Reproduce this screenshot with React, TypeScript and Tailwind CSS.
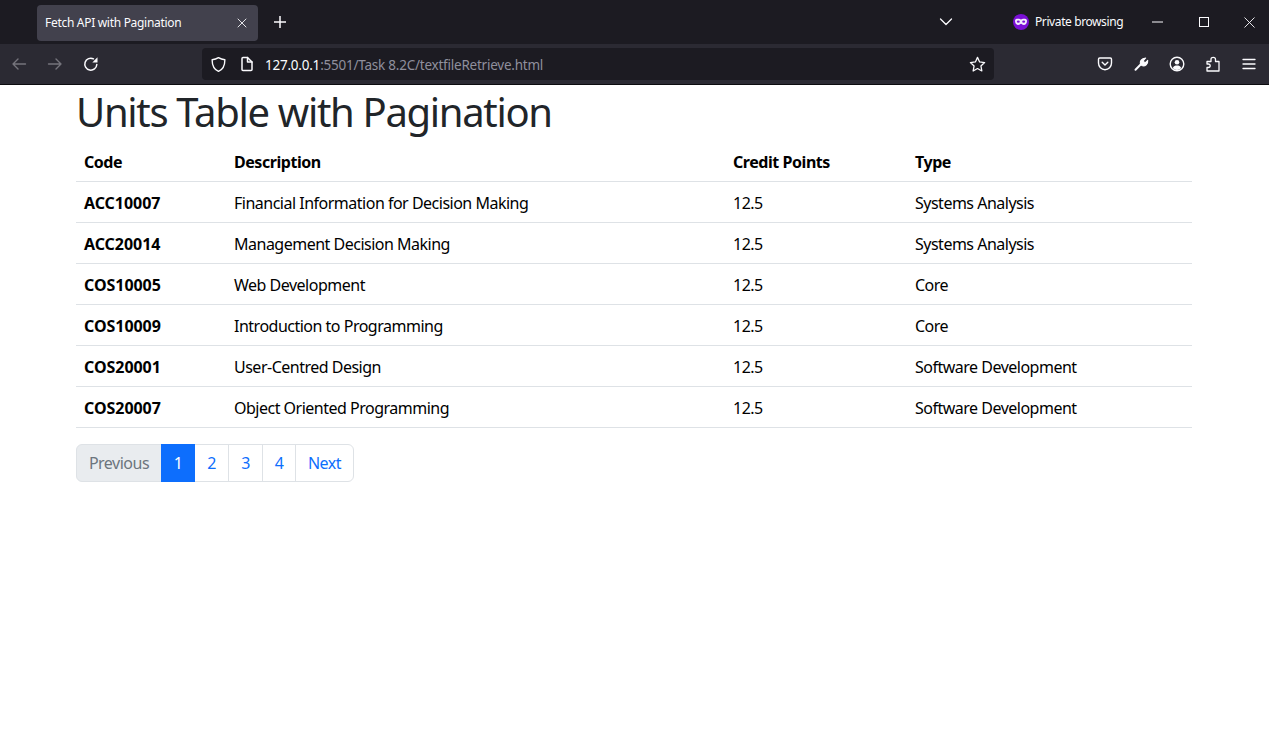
const font = "font-['Noto_Sans','Open_Sans',sans-serif]";

const rows = [
  ["ACC10007", "Financial Information for Decision Making", "12.5", "Systems Analysis"],
  ["ACC20014", "Management Decision Making", "12.5", "Systems Analysis"],
  ["COS10005", "Web Development", "12.5", "Core"],
  ["COS10009", "Introduction to Programming", "12.5", "Core"],
  ["COS20001", "User-Centred Design", "12.5", "Software Development"],
  ["COS20007", "Object Oriented Programming", "12.5", "Software Development"],
];

function Ico({ w = 16, h = 16, vb = "0 0 16 16", sw = 1.4, c = "#fbfbfe", children }: { w?: number; h?: number; vb?: string; sw?: number; c?: string; children: React.ReactNode }) {
  return (
    <svg width={w} height={h} viewBox={vb} fill="none" stroke={c} strokeWidth={sw} strokeLinecap="round" strokeLinejoin="round" className="shrink-0">
      {children}
    </svg>
  );
}

function Chrome() {
  return (
    <div className="w-full">
      <div className="h-11 bg-[#1c1b22] flex items-center relative">
        <div className="ml-[37px] mt-[1px] w-[221px] h-9 rounded bg-[#42414d] flex items-center pl-2 pr-[11px] justify-between">
          <span className="text-[12px] leading-none text-[#fbfbfe] tracking-[-0.3px]">Fetch API with Pagination</span>
          <Ico w={10} h={10} vb="0 0 10 10" sw={1} c="#e4e4e8"><path d="M1 1l8 8M9 1L1 9" /></Ico>
        </div>
        <div className="ml-[15px]">
          <Ico w={14} h={14} vb="0 0 14 14" sw={1.5}><path d="M7 1v12M1 7h12" strokeLinecap="butt" /></Ico>
        </div>
        <div className="ml-[652px]">
          <Ico w={14} h={8} vb="0 0 14 8" sw={1.3}><path d="M1.500 1l5.500 5.500L12.500 1" /></Ico>
        </div>
        <div className="ml-[60px] flex items-center gap-[6px]">
          <svg width="16" height="16" viewBox="0 0 16 16" className="shrink-0">
            <circle cx="8" cy="8" r="8" fill="#7a0fd6" />
            <path d="M2 6.800C2 5 3.800 4.800 5.200 4.800c1.300 0 1.900.6 2.800.6s1.500-.6 2.800-.6C12.200 4.800 14 5 14 6.800c0 2.400-1.300 4.200-3.200 4.200-1.500 0-1.800-1.300-2.800-1.300S6.700 11 5.200 11C3.300 11 2 9.200 2 6.800z" fill="#f3ecfc" />
            <ellipse cx="5.300" cy="7.700" rx="1.500" ry="1.100" fill="#7a0fd6" />
            <ellipse cx="10.700" cy="7.700" rx="1.500" ry="1.100" fill="#7a0fd6" />
          </svg>
          <span className="text-[12px] leading-none text-[#fbfbfe] tracking-[-0.4px] whitespace-nowrap">Private browsing</span>
        </div>
        <div className="ml-[29px]">
          <Ico w={11} h={2} vb="0 0 11 2" sw={1} c="#fbfbfe"><path d="M0 1h11" strokeLinecap="butt" /></Ico>
        </div>
        <div className="ml-[36px]">
          <Ico w={10} h={10} vb="0 0 10 10" sw={1}><rect x=".5" y=".5" width="9" height="9" strokeLinejoin="miter" /></Ico>
        </div>
        <div className="ml-[35px]">
          <Ico w={11} h={11} vb="0 0 11 11" sw={.9}><path d="M.5.5l10 10M10.500.5l-10 10" strokeLinecap="butt" /></Ico>
        </div>
      </div>
      <div className="h-[41px] bg-[#2b2a33] border-b border-[#0c0c0f] flex items-center">
        <div className="ml-[11px]">
          <Ico c="#75747c"><path d="M14.500 8H2M7 3L2 8l5 5" /></Ico>
        </div>
        <div className="ml-[20px]">
          <Ico c="#75747c"><path d="M1.500 8H14M9 3l5 5-5 5" /></Ico>
        </div>
        <div className="ml-[20px]">
          <Ico sw={1.500}>
            <path d="M13.800 8.500A6 6 0 1 1 10.500 2.800" />
            <path d="M14.500 1.300v5.200H9.300z" fill="#fbfbfe" stroke="none" />
          </Ico>
        </div>
        <div className="ml-[103px] w-[792px] h-8 rounded bg-[#1c1b22] flex items-center">
          <div className="ml-2">
            <Ico w={17} h={17} vb="0 0 16 16" sw={1.3}><path d="M8 1.500c2 1.300 3.800 1.800 6 2 0 5.500-1.800 9.200-6 11-4.200-1.800-6-5.500-6-11 2.200-.2 4-.7 6-2z" /></Ico>
          </div>
          <div className="ml-[13px]">
            <Ico w={14} h={16} vb="0 0 14 16" sw={1.5}><path d="M2 2.500c0-.6.400-1 1-1h4.500L12 6v7.500c0 .6-.4 1-1 1H3c-.6 0-1-.4-1-1z" /><path d="M7.500 1.500V6H12" /></Ico>
          </div>
          <span className="ml-[11px] pt-[3px] text-[13.500px] leading-none text-[#fbfbfe] tracking-[-0.23px] whitespace-nowrap">127.0.0.1<span className="text-[#8f8f9d]">:5501/Task 8.2C/textfileRetrieve.html</span></span>
          <div className="ml-auto mr-2">
            <Ico w={17} h={17} vb="0 0 16 16" sw={1.2}><path d="M8 1.300l2 4.300 4.700.6-3.500 3.200.9 4.700L8 11.800l-4.100 2.300.9-4.700L1.300 6.200 6 5.600z" /></Ico>
          </div>
        </div>
        <div className="ml-[103px]">
          <Ico><path d="M2.700 2h10.600c.7 0 1.200.5 1.200 1.200V7c0 3.800-2.900 6.700-6.500 6.700S1.500 10.800 1.500 7V3.200C1.500 2.500 2 2 2.700 2z" /><path d="M5.200 6.200L8 8.900l2.800-2.700" /></Ico>
        </div>
        <div className="ml-[20px]">
          <Ico sw={2}><path d="M2.500 13.800l5.400-5.600" /><path d="M7.500 8.800c-1.200-3 .8-6.800 5.200-6.800l-2.300 2.600.5 1.500 1.600.5 2.200-2.200c.5 3.300-2.500 6.500-6 5.200" fill="#fbfbfe" strokeWidth={1.100} /></Ico>
        </div>
        <div className="ml-[20px]">
          <Ico sw={1.400}><circle cx="8" cy="8" r="6.800" /><circle cx="8" cy="6.300" r="2.300" fill="#fbfbfe" stroke="none" /><path d="M3.800 12c.8-2 2.400-2.500 4.200-2.500s3.400.5 4.200 2.500c-1 1.200-2.500 2-4.200 2s-3.200-.8-4.200-2z" fill="#fbfbfe" stroke="none" /></Ico>
        </div>
        <div className="ml-[20px]">
          <Ico sw={1.300}><path d="M2 5.500h4V3.300C6 2 7 1.300 8.200 1.300S10.500 2 10.500 3.300v2.200H14V15H2v-3.500h1.300c1.200 0 1.900-.7 1.900-1.800S4.500 8 3.300 8H2z" /></Ico>
        </div>
        <div className="ml-[20px]">
          <Ico sw={1.300}><path d="M2 3.500h12M2 8h12M2 12.500h12" /></Ico>
        </div>
      </div>
    </div>
  );
}

const pageBtn = "h-[38px] flex items-center justify-center border -ml-px text-[16px] tracking-[-0.5px]";

export default function App() {
  return (
    <div className={`min-h-[731px] bg-white ${font}`}>
      <Chrome />
      <div className="mx-[76px] w-[1116px]">
        <h1 className="text-[40px] leading-[48px] text-[#212529] font-normal tracking-[-1.32px] pt-[3px] h-[55px]">Units Table with Pagination</h1>
        <table className="w-full table-fixed border-collapse text-[16px] tracking-[-0.5px] text-black">
          <colgroup>
            <col className="w-[150px]" />
            <col className="w-[499px]" />
            <col className="w-[182px]" />
            <col />
          </colgroup>
          <thead>
            <tr className="h-[41px] border-b border-[#dee2e6]">
              {["Code", "Description", "Credit Points", "Type"].map((h) => (
                <th key={h} className="px-2 pt-[4px] text-left font-bold tracking-[-0.45px]">{h}</th>
              ))}
            </tr>
          </thead>
          <tbody>
            {rows.map((r) => (
              <tr key={r[0]} className="h-[41px] border-b border-[#dee2e6]">
                <td className="px-2 pt-[3px] font-bold tracking-[-0.05px]">{r[0]}</td>
                <td className="px-2 pt-[3px]">{r[1]}</td>
                <td className="px-2 pt-[3px]">{r[2]}</td>
                <td className="px-2 pt-[3px]">{r[3]}</td>
              </tr>
            ))}
          </tbody>
        </table>
        <div className="flex mt-4 pl-px">
          <div className={`${pageBtn} w-[86px] rounded-l-md border-[#dee2e6] bg-[#e9ecef] text-[#6c757d]`}>Previous</div>
          <div className={`${pageBtn} w-[34px] bg-[#0d6efd] border-[#0d6efd] text-white z-10`}>1</div>
          <div className={`${pageBtn} w-[35px] border-[#dee2e6] text-[#0d6efd]`}>2</div>
          <div className={`${pageBtn} w-[35px] border-[#dee2e6] text-[#0d6efd]`}>3</div>
          <div className={`${pageBtn} w-[34px] border-[#dee2e6] text-[#0d6efd]`}>4</div>
          <div className={`${pageBtn} w-[59px] rounded-r-md border-[#dee2e6] text-[#0d6efd]`}>Next</div>
        </div>
      </div>
    </div>
  );
}
